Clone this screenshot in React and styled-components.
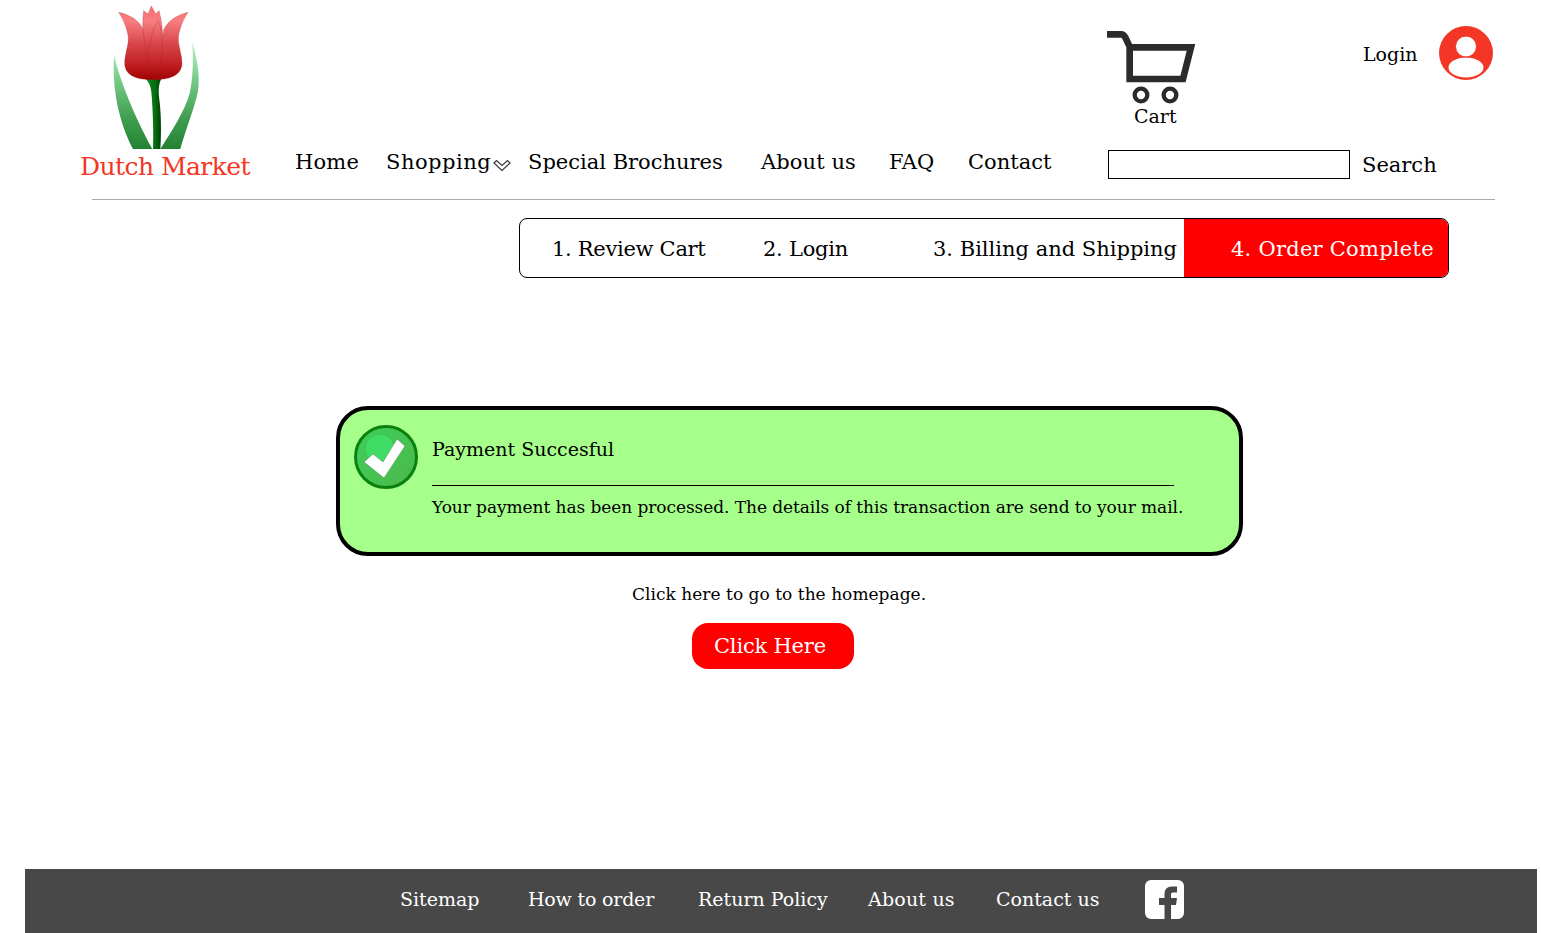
import React from 'react';
import styled, { createGlobalStyle } from 'styled-components';

const GlobalStyle = createGlobalStyle`
  html, body {
    margin: 0;
    padding: 0;
    background: #fff;
    color: #000;
    font-family: "DejaVu Serif", "Liberation Serif", serif;
  }
`;

const Page = styled.div`
  display: flex;
  flex-direction: column;
  min-height: 933px;
  overflow: hidden;
`;

const Header = styled.header`
  display: flex;
  height: 199px;
  padding-left: 80px;
`;

const Brand = styled.a`
  flex: 0 0 215px;
  display: flex;
  flex-direction: column;
  color: #f33625;
  font-size: 25px;
  line-height: 30px;
  letter-spacing: -0.55px;
`;

const TulipMark = styled.svg`
  display: block;
  width: 100px;
  height: 153px;
  margin-left: 23px;
  margin-bottom: -1px;
`;

const NavColumn = styled.div`
  flex: 0 0 813px;
  display: flex;
  flex-direction: column;
  justify-content: flex-end;
  padding-bottom: 24px;
`;

const Nav = styled.nav`
  display: flex;
  align-items: center;
  height: 26px;
`;

const NavItem = styled.a`
  flex: 0 0 ${({ $w }) => $w}px;
  display: flex;
  align-items: center;
  font-size: 21px;
  line-height: 26px;
  letter-spacing: ${({ $ls }) => $ls ?? 0}px;
  white-space: nowrap;
`;

const Chevron = styled.svg`
  width: 18px;
  height: 13px;
  margin: 6px 0 0 2px;
`;

const Tools = styled.div`
  flex: 0 0 400px;
  display: flex;
  flex-direction: column;
`;

const ToolsTop = styled.div`
  display: flex;
  height: 150px;
`;

const CartLink = styled.a`
  flex: 0 0 255px;
  display: flex;
  flex-direction: column;
  padding-top: 31px;
  font-size: 19px;
  line-height: 22px;
`;

const CartIcon = styled.svg`
  display: block;
  width: 89px;
  height: 74px;
  margin-left: -1px;
`;

const CartLabel = styled.span`
  margin: 0 0 0 26px;
`;

const LoginLink = styled.a`
  display: flex;
  align-items: center;
  gap: 21px;
  height: 54px;
  margin-top: 26px;
  font-size: 19px;
`;

const LoginText = styled.span`
  padding-top: 2px;
`;

const Avatar = styled.svg`
  width: 54px;
  height: 54px;
`;

const SearchRow = styled.form`
  display: flex;
  align-items: center;
  gap: 12px;
  font-size: 21px;
`;

const SearchInput = styled.input`
  box-sizing: border-box;
  width: 242px;
  height: 29px;
  border: 1px solid #000;
  background: #fff;
  padding: 0;
`;

const Rule = styled.hr`
  width: 1403px;
  height: 1px;
  margin: 0 0 0 92px;
  border: 0;
  background: #a9a9a9;
`;

const Steps = styled.ol`
  box-sizing: border-box;
  display: flex;
  width: 930px;
  height: 60px;
  margin: 18px 0 0 519px;
  padding: 0 0 0 32px;
  border: 1px solid #000;
  border-radius: 8px;
  list-style: none;
  overflow: hidden;
  font-size: 21px;
`;

const Step = styled.li`
  flex: ${({ $active, $w }) => ($active ? '1' : `0 0 ${$w}px`)};
  display: flex;
  align-items: center;
  padding: 2px 0 0 ${({ $active }) => ($active ? '47px' : '0')};
  background: ${({ $active }) => ($active ? '#ff0000' : 'transparent')};
  color: ${({ $active }) => ($active ? '#fff' : '#000')};
  letter-spacing: ${({ $ls }) => $ls ?? 0}px;
  white-space: nowrap;
`;

const Alert = styled.section`
  box-sizing: border-box;
  display: flex;
  width: 907px;
  height: 150px;
  margin: 128px 0 0 336px;
  padding: 14px 0 0 14px;
  border: 4px solid #000;
  border-radius: 32px;
  background: #a6ff8b;
`;

const CheckIcon = styled.svg`
  flex: 0 0 64px;
  width: 64px;
  height: 66px;
`;

const AlertBody = styled.div`
  margin-left: 14px;
  width: 790px;
`;

const AlertTitle = styled.h2`
  margin: 0;
  height: 47px;
  font-size: 19px;
  font-weight: 400;
  line-height: 50px;
`;

const AlertRule = styled.hr`
  width: 742px;
  height: 1px;
  margin: 14px 0 0;
  border: 0;
  background: #000;
`;

const AlertText = styled.p`
  margin: 9px 0 0;
  font-size: 17px;
  line-height: 24px;
  letter-spacing: -0.07px;
  white-space: nowrap;
`;

const HomeHint = styled.p`
  margin: 26px 0 0 632px;
  font-size: 17px;
  line-height: 24px;
  letter-spacing: 0.03px;
`;

const HomeButton = styled.a`
  box-sizing: border-box;
  display: flex;
  align-items: center;
  width: 162px;
  height: 46px;
  margin: 17px 0 0 692px;
  padding-left: 22px;
  border-radius: 16px;
  background: #ff0000;
  color: #fff;
  font-size: 21px;
  letter-spacing: -0.2px;
`;

const Footer = styled.footer`
  box-sizing: border-box;
  display: flex;
  align-items: center;
  height: 64px;
  margin: auto 4px 0 25px;
  padding: 0 0 4px 375px;
  background: #484848;
  color: #fff;
`;

const FooterLink = styled.a`
  flex: 0 0 ${({ $w }) => $w}px;
  padding-bottom: 1px;
  font-size: 19px;
  letter-spacing: ${({ $ls }) => $ls ?? 0}px;
  white-space: nowrap;
`;

const FacebookIcon = styled.svg`
  width: 39px;
  height: 39px;
`;

const navItems = [
  { label: 'Home', w: 91, ls: 0.2 },
  { label: 'Shopping', w: 142, ls: 0.5 },
  { label: 'Special Brochures', w: 233 },
  { label: 'About us', w: 128, ls: 0.1 },
  { label: 'FAQ', w: 79 },
  { label: 'Contact', w: 140 },
];

const steps = [
  { label: '1. Review Cart', w: 211, ls: -0.3 },
  { label: '2. Login', w: 170, ls: -0.25 },
  { label: '3. Billing and Shipping', w: 251 },
];

const footerLinks = [
  { label: 'Sitemap', w: 128 },
  { label: 'How to order', w: 170, ls: -0.2 },
  { label: 'Return Policy', w: 170 },
  { label: 'About us', w: 128, ls: 0.2 },
  { label: 'Contact us', w: 149 },
];

const Tulip = () => (
  <TulipMark viewBox="100 0 300 459" aria-hidden="true">
    <defs>
      <linearGradient id="petal" gradientUnits="userSpaceOnUse" x1="0" y1="18" x2="0" y2="240">
        <stop offset="0" stopColor="#ff6b6b" />
        <stop offset="0.2" stopColor="#f87e82" />
        <stop offset="0.5" stopColor="#d9484c" />
        <stop offset="0.8" stopColor="#bf1e20" />
        <stop offset="1" stopColor="#a00000" />
      </linearGradient>
      <linearGradient id="leaf" gradientUnits="userSpaceOnUse" x1="0" y1="125" x2="0" y2="447">
        <stop offset="0" stopColor="#c4f0cb" />
        <stop offset="0.35" stopColor="#76cc88" />
        <stop offset="0.7" stopColor="#429f52" />
        <stop offset="1" stopColor="#238232" />
      </linearGradient>
      <linearGradient id="stem" x1="0" y1="0" x2="1" y2="0">
        <stop offset="0" stopColor="#0c8a18" />
        <stop offset="0.6" stopColor="#067010" />
        <stop offset="1" stopColor="#023a06" />
      </linearGradient>
    </defs>
    <path fill="url(#leaf)" d="M133 165C150 240 195 350 248 447L190 447C160 390 125 290 133 165Z" />
    <path fill="url(#leaf)" d="M367 125C385 180 395 250 380 295C368 340 345 400 332 447L272 447C305 395 345 335 360 280C370 235 372 175 367 125Z" />
    <path fill="url(#stem)" d="M228 236C240 250 245 260 247 300C250 350 252 400 250 447L272 447C275 400 275 340 268 290C266 265 268 250 275 236Z" />
    <g stroke="#a31c22" strokeWidth="0.8">
      <path fill="url(#petal)" d="M245 18L258 42L268 32C285 90 280 160 270 238L232 238C220 160 215 90 222 32L235 42Z" />
      <path fill="url(#petal)" d="M147 37C180 45 210 60 220 90C226 130 232 190 240 238C200 240 165 225 165 190C165 160 180 130 175 105C170 80 160 55 147 37Z" />
      <path fill="url(#petal)" d="M355 37C325 45 295 60 282 90C276 130 268 190 260 238C300 240 337 225 337 190C337 160 322 130 327 105C332 80 342 55 355 37Z" />
      <path fill="url(#petal)" d="M266 62C280 100 285 150 262 238C248 240 240 240 236 232C232 180 235 110 266 62Z" />
    </g>
  </TulipMark>
);

const Cart = () => (
  <CartIcon viewBox="50 48 267 222" aria-hidden="true">
    <g fill="none" stroke="#2b2b2b" strokeWidth="20">
      <path d="M50 58H94C102 58 106 70 118 95V192H278L302 97H118" />
      <circle cx="152" cy="240" r="19" strokeWidth="13" />
      <circle cx="239" cy="240" r="19" strokeWidth="13" />
    </g>
  </CartIcon>
);

const App = () => (
  <Page>
    <GlobalStyle />
    <Header>
      <Brand>
        <Tulip />
        Dutch Market
      </Brand>
      <NavColumn>
        <Nav>
          {navItems.map(({ label, w, ls }) => (
            <NavItem key={label} $w={w} $ls={ls}>
              {label}
              {label === 'Shopping' && (
                <Chevron viewBox="0 0 18 13" aria-hidden="true">
                  <path fill="none" stroke="#333" strokeWidth="1.1" d="M1 4L3.5 1.5L9 6.5L14.5 1.5L17 4L9 11.5Z" />
                </Chevron>
              )}
            </NavItem>
          ))}
        </Nav>
      </NavColumn>
      <Tools>
        <ToolsTop>
          <CartLink>
            <Cart />
            <CartLabel>Cart</CartLabel>
          </CartLink>
          <LoginLink>
            <LoginText>Login</LoginText>
            <Avatar viewBox="0 0 54 54" aria-hidden="true">
              <circle cx="27" cy="27" r="27" fill="#f33625" />
              <ellipse cx="27" cy="41.5" rx="17.5" ry="10" fill="#fff" />
              <circle cx="27" cy="20.5" r="10.5" fill="#fff" stroke="#f33625" strokeWidth="1" />
            </Avatar>
          </LoginLink>
        </ToolsTop>
        <SearchRow>
          <SearchInput aria-label="Search" />
          Search
        </SearchRow>
      </Tools>
    </Header>
    <Rule />
    <Steps>
      {steps.map(({ label, w, ls }) => (
        <Step key={label} $w={w} $ls={ls}>{label}</Step>
      ))}
      <Step $active $ls={0.25}>4. Order Complete</Step>
    </Steps>
    <Alert>
      <CheckIcon viewBox="0 0 64 66" aria-hidden="true">
        <defs>
          <linearGradient id="badge" x1="0" y1="0" x2="1" y2="1">
            <stop offset="0" stopColor="#3ecf5c" />
            <stop offset="1" stopColor="#4db84a" />
          </linearGradient>
        </defs>
        <circle cx="32" cy="33" r="30.5" fill="url(#badge)" stroke="#0b800f" strokeWidth="3" />
        <circle cx="26" cy="25" r="14" fill="#3fdc66" />
        <path fill="#fff" stroke="#4a8a4a" strokeWidth="0.5" d="M10 38L19 30L29 38L43 15L51 22L30 54Z" />
      </CheckIcon>
      <AlertBody>
        <AlertTitle>Payment Succesful</AlertTitle>
        <AlertRule />
        <AlertText>Your payment has been processed. The details of this transaction are send to your mail.</AlertText>
      </AlertBody>
    </Alert>
    <HomeHint>Click here to go to the homepage.</HomeHint>
    <HomeButton>Click Here</HomeButton>
    <Footer>
      {footerLinks.map(({ label, w, ls }) => (
        <FooterLink key={label} $w={w} $ls={ls}>{label}</FooterLink>
      ))}
      <FacebookIcon viewBox="0 0 39 39" aria-hidden="true">
        <path fill="#fff" d="M6 0H33A6 6 0 0 1 39 6V33A6 6 0 0 1 33 39H26V25H31L32 18H26V14C26 13 27 12.5 28 12.5H32V6.5H27C22 6.5 19.5 9.5 19.5 14V18H14V25H19.5V39H6A6 6 0 0 1 0 33V6A6 6 0 0 1 6 0Z" />
      </FacebookIcon>
    </Footer>
  </Page>
);

export default App;
